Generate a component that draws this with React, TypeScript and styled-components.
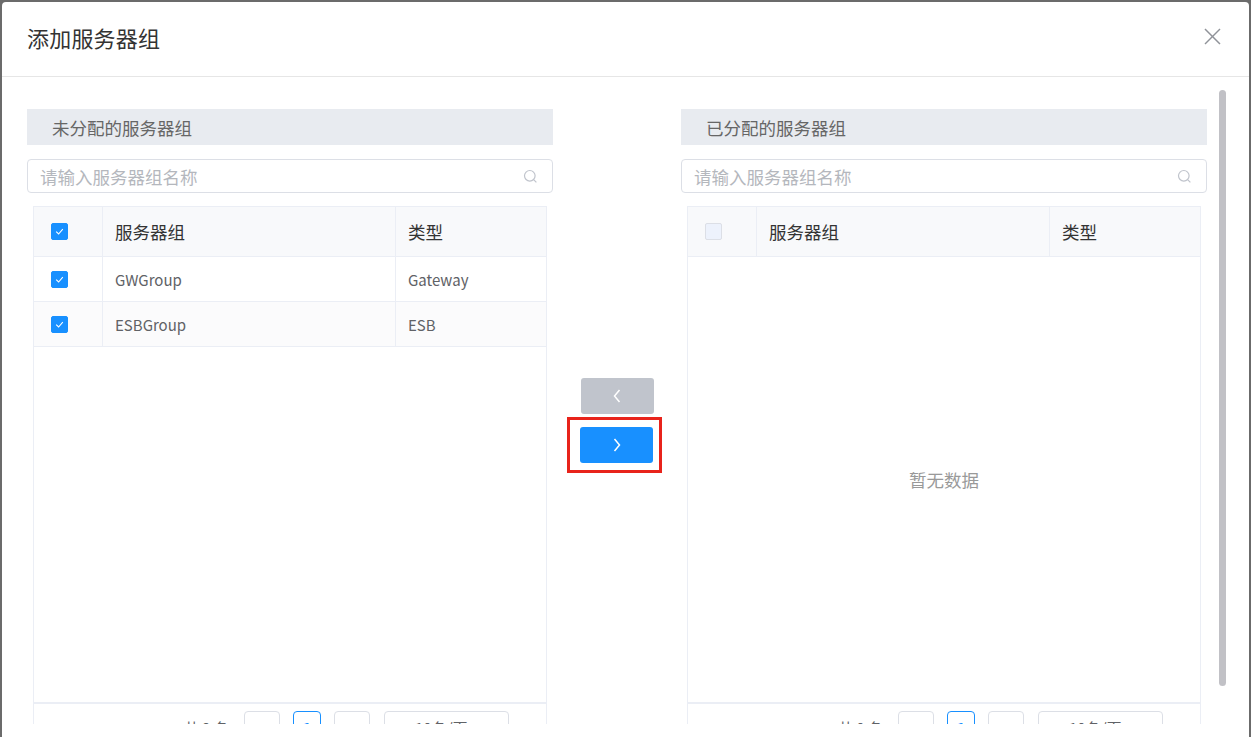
import React from 'react';
import styled, { createGlobalStyle, css } from 'styled-components'

const Global = createGlobalStyle`
  html, body {
    margin: 0;
    height: 737px;
    overflow: hidden;
    background: #6b6b6b;
  }
  body {
    font-family: "Noto Sans CJK SC", "Noto Sans", sans-serif;
    color: #333;
  }
`

const Dialog = styled.div`
  position: relative;
  margin: 2px 2px 0 2px;
  height: 735px;
  background: #fff;
  border-radius: 4px 4px 0 0;
`
const Header = styled.div`
  height: 74px;
  border-bottom: 1px solid #e6e6e6;
  display: flex;
  align-items: center;
  justify-content: space-between;
  padding: 0 27px 0 25px;
`
const Title = styled.div`
  font-size: 22px;
  color: #333;
  letter-spacing: 0.2px;
  margin-top: -5px;
`
const Close = styled.button`
  border: none;
  background: none;
  padding: 0;
  width: 19px;
  height: 19px;
  margin-top: -5px;
  cursor: pointer;
  display: flex;
`
const Body = styled.div`
  height: 647px;
  overflow: hidden;
  padding: 32px 0 0 25px;
  box-sizing: border-box;
`
const Columns = styled.div`
  display: flex;
  align-items: flex-start;
`
const Panel = styled.section`
  width: 526px;
  display: flex;
  flex-direction: column;
`
const PanelTitle = styled.div`
  height: 36px;
  background: #e8ebf0;
  display: flex;
  align-items: center;
  padding-left: 25px;
  font-size: 17.5px;
  color: #666;
`
const Search = styled.label`
  margin-top: 14px;
  height: 34px;
  box-sizing: border-box;
  border: 1px solid #dcdfe6;
  border-radius: 4px;
  display: flex;
  align-items: center;
  padding: 0 14px 0 12px;
`
const SearchInput = styled.input`
  flex: 1;
  border: none;
  outline: none;
  font: inherit;
  font-size: 17.5px;
  color: #333;
  background: transparent;
  padding: 0;
  &::placeholder { color: #b4b7bd; }
`
const Table = styled.div`
  margin: 13px 6px 0;
  border: 1px solid #ebeef5;
  border-bottom: none;
`
const rowGrid = css`
  display: grid;
  grid-template-columns: 69px 293px 1fr;
`
const HeadRow = styled.div`
  ${rowGrid}
  height: 49px;
  background: #f8f9fb;
  border-bottom: 1px solid #ebeef5;
  font-size: 17.5px;
  color: #333;
`
const Row = styled.div<{ $striped?: boolean }>`
  ${rowGrid}
  height: 44px;
  border-bottom: 1px solid #ebeef5;
  font-size: 15px;
  color: #606266;
  background: ${p => (p.$striped ? '#fbfbfc' : '#fff')};
`
const Cell = styled.div<{ $check?: boolean; $last?: boolean }>`
  display: flex;
  align-items: center;
  padding-left: ${p => (p.$check ? '17px' : '12px')};
  border-right: ${p => (p.$last ? 'none' : '1px solid #ebeef5')};
`
const TableBody = styled.div`
  height: 445px;
  display: flex;
  flex-direction: column;
`
const Empty = styled.div`
  flex: 1;
  display: flex;
  align-items: center;
  justify-content: center;
  font-size: 17.5px;
  color: #999;
`
const Box = styled.span<{ $checked?: boolean }>`
  width: 17px;
  height: 17px;
  box-sizing: border-box;
  border-radius: 2px;
  display: flex;
  align-items: center;
  justify-content: center;
  ${p => p.$checked
    ? css`background: #1890ff; border: 1px solid #1890ff;`
    : css`background: #edf2fc; border: 1px solid #dcdfe6;`}
`
const Pager = styled.div`
  border-top: 2px solid #ebeef5;
  height: 50px;
  display: flex;
  align-items: flex-start;
  justify-content: flex-end;
  padding: 7px 37px 0 0;
  gap: 13px;
  font-size: 15px;
  color: #606266;
`
const Total = styled.span`
  margin-top: 6px;
  margin-right: 2px;
`
const PageBtn = styled.button<{ $active?: boolean; $wide?: boolean }>`
  width: ${p => (p.$wide ? '36px' : '28px')};
  height: 32px;
  box-sizing: border-box;
  border-radius: 4px;
  border: 1px solid ${p => (p.$active ? '#1890ff' : '#dcdfe6')};
  background: #fff;
  color: ${p => (p.$active ? '#1890ff' : '#c0c4cc')};
  font: inherit;
  font-weight: ${p => (p.$active ? 700 : 400)};
  padding: 0;
`
const SizeSelect = styled.div`
  width: 125px;
  height: 32px;
  box-sizing: border-box;
  border: 1px solid #dcdfe6;
  border-radius: 4px;
  display: flex;
  align-items: center;
  padding-left: 30px;
  margin-left: 1px;
`
const Middle = styled.div`
  width: 128px;
  display: flex;
  flex-direction: column;
  align-items: center;
  padding-top: 269px;
`
const Move = styled.button<{ $primary?: boolean }>`
  width: 73px;
  height: 36px;
  border: none;
  border-radius: 3px;
  display: flex;
  align-items: center;
  justify-content: center;
  background: ${p => (p.$primary ? '#1890ff' : '#c0c4cc')};
  cursor: pointer;
  padding: 0;
`
const Highlight = styled.div`
  margin-top: 3px;
  margin-left: -5px;
  border: 3px solid #e8231b;
  padding: 7px 6px 7px 10px;
`
const Thumb = styled.div`
  position: absolute;
  top: 88px;
  left: 1217px;
  width: 7px;
  height: 596px;
  border-radius: 4px;
  background: #c1c1c6;
`

const Check = () => (
  <svg width="11" height="11" viewBox="0 0 11 11">
    <polyline points="2.2,5.6 4.6,8 8.8,3.2" fill="none" stroke="#fff" strokeWidth="1.1" />
  </svg>
)

const SearchIcon = () => (
  <svg width="15" height="15" viewBox="0 0 15 15">
    <circle cx="6.8" cy="6.8" r="5.3" fill="none" stroke="#c0c4cc" strokeWidth="1.2" />
    <line x1="10.6" y1="10.6" x2="13.4" y2="13.4" stroke="#c0c4cc" strokeWidth="1.2" />
  </svg>
)

const Chevron = ({ dir }: { dir: 'left' | 'right' }) => (
  <svg width="10" height="16" viewBox="0 0 10 16">
    <polyline
      points={dir === 'left' ? '7.5,2 2.5,8 7.5,14' : '2.5,2 7.5,8 2.5,14'}
      fill="none" stroke="#fff" strokeWidth="1.5"
    />
  </svg>
)

type Group = { name: string; type: string }

const TransferPanel = ({ title, rows, checked }: { title: string; rows: Group[]; checked: boolean }) => (
  <Panel>
    <PanelTitle>{title}</PanelTitle>
    <Search>
      <SearchInput placeholder="请输入服务器组名称" />
      <SearchIcon />
    </Search>
    <Table>
      <HeadRow>
        <Cell $check><Box $checked={checked}>{checked && <Check />}</Box></Cell>
        <Cell>服务器组</Cell>
        <Cell $last>类型</Cell>
      </HeadRow>
      <TableBody>
        {rows.map((r, i) => (
          <Row key={r.name} $striped={i % 2 === 1}>
            <Cell $check><Box $checked><Check /></Box></Cell>
            <Cell>{r.name}</Cell>
            <Cell $last>{r.type}</Cell>
          </Row>
        ))}
        {rows.length === 0 && <Empty>暂无数据</Empty>}
      </TableBody>
      <Pager>
        <Total>共 {rows.length} 条</Total>
        <PageBtn $wide>‹</PageBtn>
        <PageBtn $active>1</PageBtn>
        <PageBtn $wide>›</PageBtn>
        <SizeSelect>10条/页</SizeSelect>
      </Pager>
    </Table>
  </Panel>
)

const App = () => {
  const unassigned: Group[] = [
    { name: 'GWGroup', type: 'Gateway' },
    { name: 'ESBGroup', type: 'ESB' },
  ]
  return (
    <>
      <Global />
      <Dialog>
        <Header>
          <Title>添加服务器组</Title>
          <Close aria-label="关闭">
            <svg width="19" height="19" viewBox="0 0 19 19">
              <line x1="2" y1="2" x2="17" y2="17" stroke="#909399" strokeWidth="1.5" />
              <line x1="17" y1="2" x2="2" y2="17" stroke="#909399" strokeWidth="1.5" />
            </svg>
          </Close>
        </Header>
        <Body>
          <Columns>
            <TransferPanel title="未分配的服务器组" rows={unassigned} checked />
            <Middle>
              <Move><Chevron dir="left" /></Move>
              <Highlight>
                <Move $primary><Chevron dir="right" /></Move>
              </Highlight>
            </Middle>
            <TransferPanel title="已分配的服务器组" rows={[]} checked={false} />
          </Columns>
        </Body>
        <Thumb />
      </Dialog>
    </>
  );
}

export default App;
